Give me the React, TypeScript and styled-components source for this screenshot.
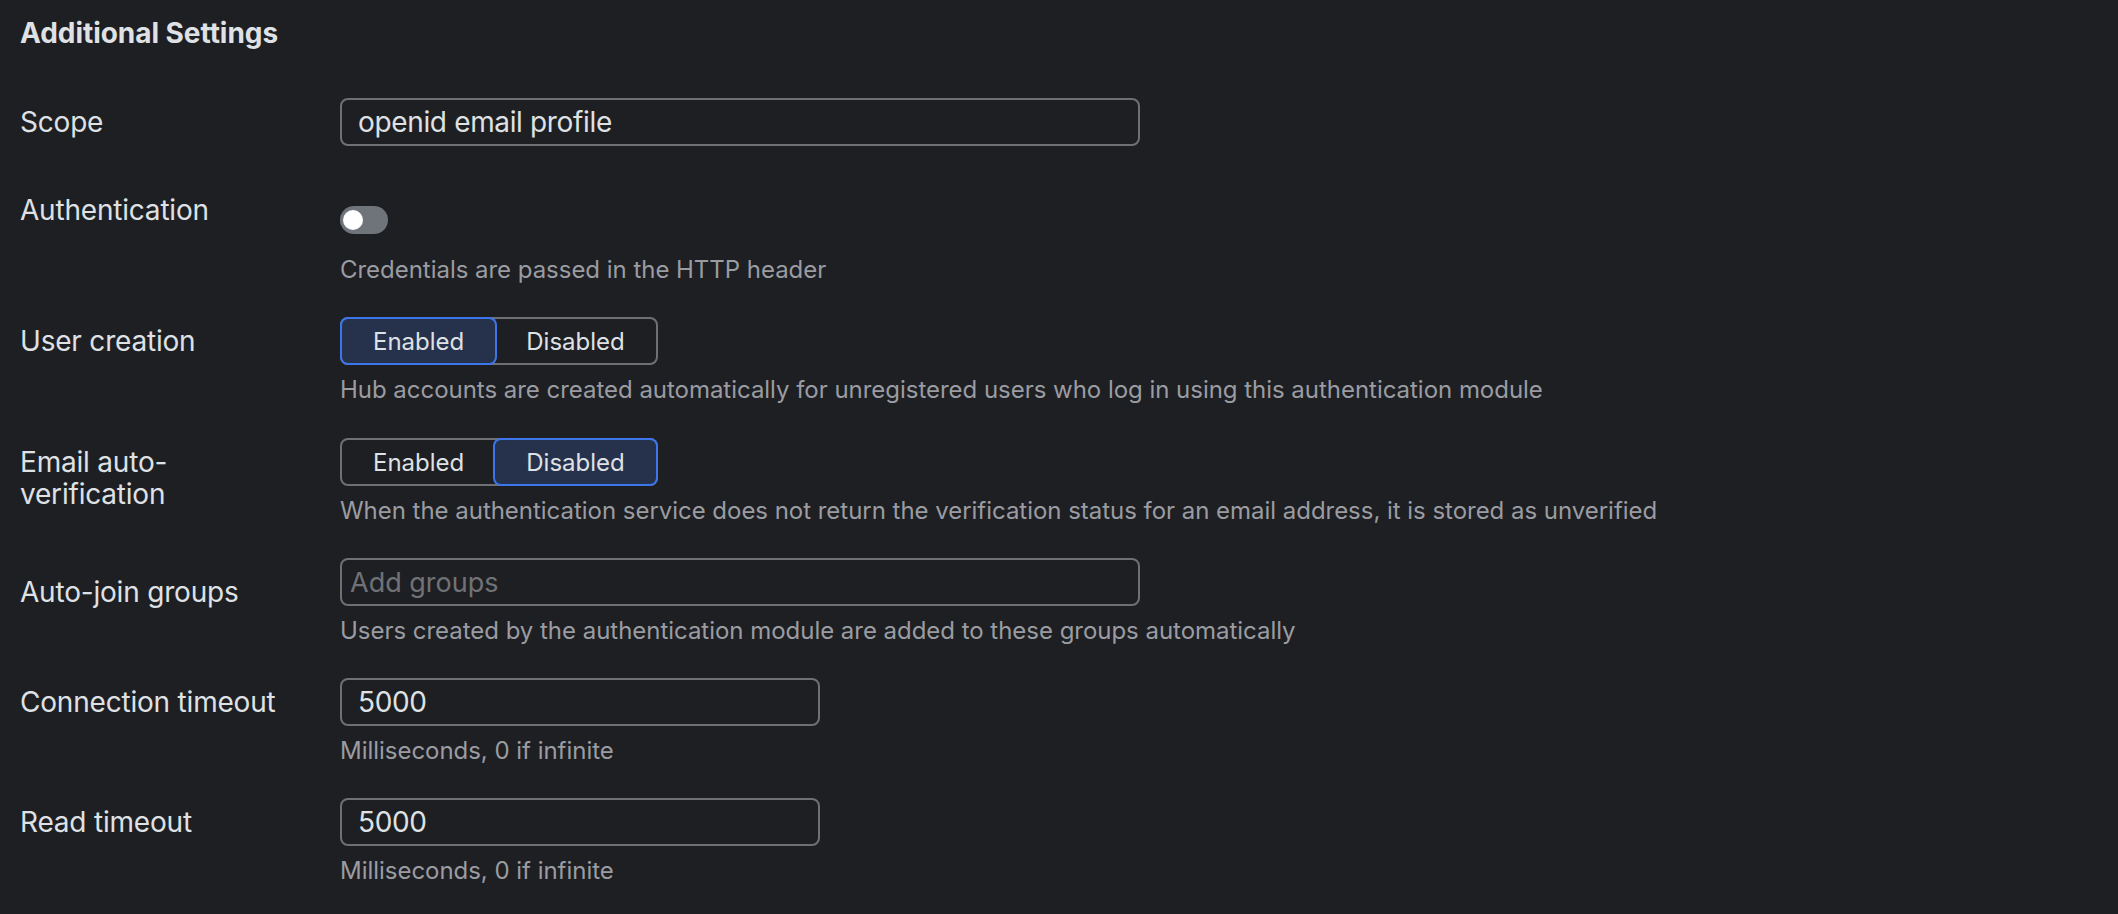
import React from 'react';
import styled, { createGlobalStyle } from 'styled-components';

const GlobalStyle = createGlobalStyle`
  html, body {
    margin: 0;
    padding: 0;
    background: #1e1f22;
  }
  body {
    font-family: Inter, "Noto Sans", sans-serif;
    color: #dfe1e5;
    -webkit-font-smoothing: antialiased;
  }
  * { box-sizing: border-box; }
`;

const Page = styled.div`
  padding: 17px 20px 40px;
  min-height: 914px;
`;

const Heading = styled.h2`
  margin: 0 0 49px;
  font-size: 28px;
  line-height: 32px;
  font-weight: 700;
  letter-spacing: -0.05px;
  color: #dfe1e5;
`;

const Rows = styled.div`
  display: flex;
  flex-direction: column;
  gap: 31px;
`;

const Row = styled.div<{ $extraTop?: number }>`
  display: grid;
  grid-template-columns: 320px 1fr;
  margin-top: ${(p) => p.$extraTop ?? 0}px;
`;

const Label = styled.div<{ $offset?: number }>`
  padding-top: ${(p) => 8 + (p.$offset ?? 0)}px;
  padding-right: 40px;
  font-size: 28px;
  line-height: 32px;
  letter-spacing: -0.2px;
  color: #dfe1e5;
`;

const Control = styled.div`
  display: flex;
  flex-direction: column;
  align-items: flex-start;
`;

const TextInput = styled.input<{ $width: number }>`
  width: ${(p) => p.$width}px;
  height: 48px;
  padding: 0 16px;
  border: 2px solid #6f7074;
  border-radius: 8px;
  background: transparent;
  color: #dfe1e5;
  font-family: Inter, "Noto Sans", sans-serif;
  font-size: 28px;
  letter-spacing: -0.35px;
  outline: none;
`;

const TagInput = styled.input`
  width: 800px;
  height: 48px;
  padding: 0 8px;
  border: 2px solid #6f7074;
  border-radius: 8px;
  background: transparent;
  color: #dfe1e5;
  font-family: Inter, "Noto Sans", sans-serif;
  font-size: 27px;
  outline: none;
  &::placeholder {
    color: #707278;
  }
`;

const Description = styled.div`
  margin-top: 9px;
  font-size: 24px;
  line-height: 32px;
  letter-spacing: -0.03px;
  color: #9a9ca2;
`;

const ToggleWrap = styled.div`
  height: 59px;
  padding-top: 20px;
`;

const Toggle = styled.span<{ $on?: boolean }>`
  display: block;
  position: relative;
  width: 48px;
  height: 28px;
  border-radius: 14px;
  background: ${(p) => (p.$on ? '#3574f0' : '#6f737a')};
  &::after {
    content: '';
    position: absolute;
    top: 4px;
    left: ${(p) => (p.$on ? '24px' : '3px')};
    width: 20px;
    height: 20px;
    border-radius: 50%;
    background: #ffffff;
  }
`;

const Segmented = styled.div`
  display: inline-flex;
  height: 48px;
  border: 2px solid #6f7074;
  border-radius: 8px;
`;

const SegButton = styled.button<{ $active?: boolean }>`
  height: 44px;
  padding: 0 31px;
  border: none;
  border-radius: 6px;
  background: ${(p) => (p.$active ? '#26324c' : 'transparent')};
  box-shadow: ${(p) => (p.$active ? '0 0 0 2px #3d76ea' : 'none')};
  color: #dfe1e5;
  font-family: Inter, "Noto Sans", sans-serif;
  font-size: 24px;
  cursor: pointer;
`;

function Switcher({ value }: { value: 'enabled' | 'disabled' }) {
  return (
    <Segmented>
      <SegButton $active={value === 'enabled'}>Enabled</SegButton>
      <SegButton $active={value === 'disabled'}>Disabled</SegButton>
    </Segmented>
  );
}

export default function App() {
  return (
    <>
      <GlobalStyle />
      <Page>
        <Heading>Additional Settings</Heading>
        <Rows>
          <Row>
            <Label>Scope</Label>
            <Control>
              <TextInput $width={800} defaultValue="openid email profile" />
            </Control>
          </Row>
          <Row $extraTop={9}>
            <Label>Authentication</Label>
            <Control>
              <ToggleWrap>
                <Toggle />
              </ToggleWrap>
              <Description>Credentials are passed in the HTTP header</Description>
            </Control>
          </Row>
          <Row>
            <Label>User creation</Label>
            <Control>
              <Switcher value="enabled" />
              <Description>
                Hub accounts are created automatically for unregistered users who log in using this authentication module
              </Description>
            </Control>
          </Row>
          <Row $extraTop={1}>
            <Label>Email auto-verification</Label>
            <Control>
              <Switcher value="disabled" />
              <Description>
                When the authentication service does not return the verification status for an email address, it is stored as unverified
              </Description>
            </Control>
          </Row>
          <Row>
            <Label $offset={10}>Auto-join groups</Label>
            <Control>
              <TagInput placeholder="Add groups" />
              <Description>
                Users created by the authentication module are added to these groups automatically
              </Description>
            </Control>
          </Row>
          <Row>
            <Label>Connection timeout</Label>
            <Control>
              <TextInput $width={480} defaultValue="5000" />
              <Description>Milliseconds, 0 if infinite</Description>
            </Control>
          </Row>
          <Row>
            <Label>Read timeout</Label>
            <Control>
              <TextInput $width={480} defaultValue="5000" />
              <Description>Milliseconds, 0 if infinite</Description>
            </Control>
          </Row>
        </Rows>
      </Page>
    </>
  );
}
